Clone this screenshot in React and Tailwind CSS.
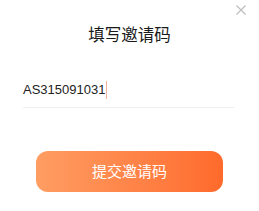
export default function App() {
  return (
    <div className="relative w-[259px] h-[211px] bg-white overflow-hidden">
      <button className="absolute top-[5px] right-[13px] w-[10px] h-[10px] text-[#bdbdbd]">
        <svg viewBox="0 0 10 10" width="10" height="10" fill="none" stroke="currentColor" strokeWidth="1.2">
          <path d="M0.5 0.5 L9.5 9.5 M9.5 0.5 L0.5 9.5" />
        </svg>
      </button>

      <h2 className="pt-[22px] text-center text-[16.5px] leading-[24px] font-normal text-[#1a1a1a] font-['Noto_Sans_CJK_SC',sans-serif]">
        填写邀请码
      </h2>

      <div className="mx-[23px] mt-[35px] w-[211px] border-b border-[#f0f0f0] pb-[8px]">
        <div className="flex items-center h-[18px] text-[13px] text-[#222] font-['Liberation_Sans',sans-serif]">
          <span>AS315091031</span>
          <span className="ml-px w-px h-[18px] bg-[#f3b2a0]" />
        </div>
      </div>

      <div className="flex justify-center mt-[43px]">
        <button className="w-[187px] h-[41px] rounded-[12px] bg-gradient-to-r from-[#ff9d62] to-[#ff6a2b] text-white text-[15px] font-['Noto_Sans_CJK_SC',sans-serif]">
          提交邀请码
        </button>
      </div>
    </div>
  );
}
